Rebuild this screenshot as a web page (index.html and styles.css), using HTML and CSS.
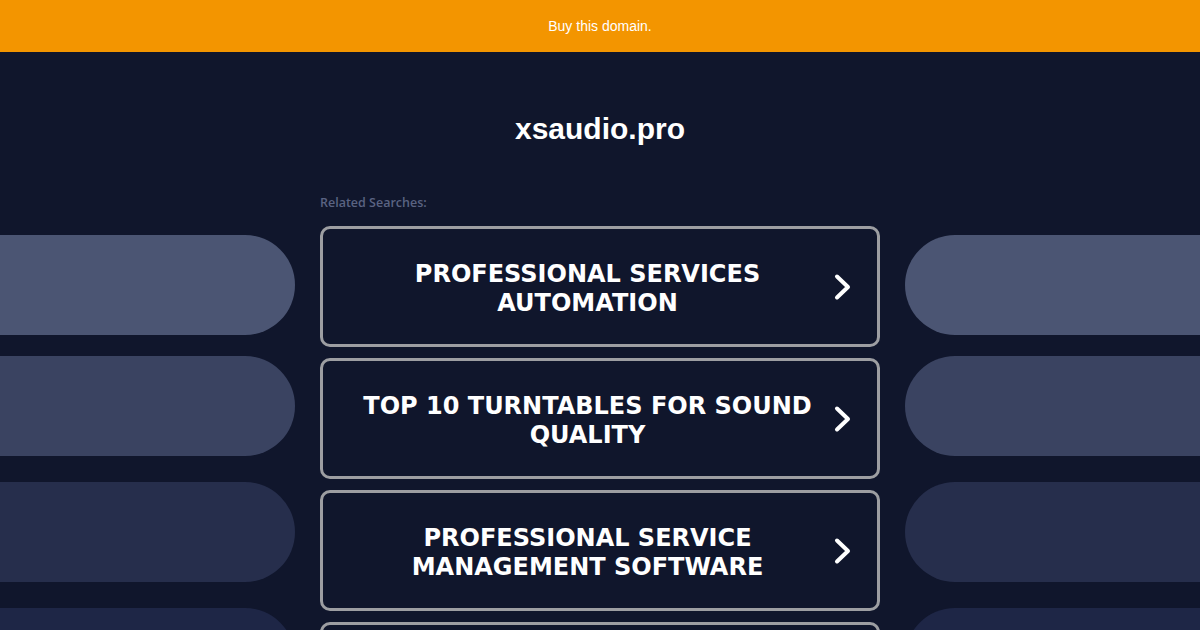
FILE: index.html
```html
<!DOCTYPE html>
<html lang="en">
<head>
    <meta charset="UTF-8">
    <meta name="viewport" content="width=device-width, initial-scale=1.0">
    <title>xsaudio.pro</title>
    <link rel="stylesheet" href="styles.css">
</head>
<body>
    <div class="topbar">
        <a href="#">Buy this domain.</a>
    </div>
    <div class="main">
        <div class="side side-left">
            <div class="pill pill-1"></div>
            <div class="pill pill-2"></div>
            <div class="pill pill-3"></div>
            <div class="pill pill-4"></div>
        </div>
        <div class="center">
            <h1>xsaudio.pro</h1>
            <p class="label">Related Searches:</p>
            <a class="card" href="#">
                <span class="card-text">PROFESSIONAL SERVICES AUTOMATION</span>
                <svg class="chevron" width="20" height="28" viewBox="0 0 20 28"><path d="M4 3.5 L15 14 L4 24.5"/></svg>
            </a>
            <a class="card" href="#">
                <span class="card-text">TOP 10 TURNTABLES FOR SOUND QUALITY</span>
                <svg class="chevron" width="20" height="28" viewBox="0 0 20 28"><path d="M4 3.5 L15 14 L4 24.5"/></svg>
            </a>
            <a class="card" href="#">
                <span class="card-text">PROFESSIONAL SERVICE MANAGEMENT SOFTWARE</span>
                <svg class="chevron" width="20" height="28" viewBox="0 0 20 28"><path d="M4 3.5 L15 14 L4 24.5"/></svg>
            </a>
            <a class="card" href="#"></a>
        </div>
        <div class="side side-right">
            <div class="pill pill-1"></div>
            <div class="pill pill-2"></div>
            <div class="pill pill-3"></div>
            <div class="pill pill-4"></div>
        </div>
    </div>
</body>
</html>
```

FILE: styles.css
```css
* {
    margin: 0;
    padding: 0;
    box-sizing: border-box;
}

body {
    height: 630px;
    overflow: hidden;
    background: #10162c;
    font-family: 'Liberation Sans', Arial, sans-serif;
    color: #fff;
}

.topbar {
    height: 52px;
    background: #f39500;
    display: flex;
    justify-content: center;
    align-items: center;
}

.topbar a {
    color: #fff;
    font-size: 14px;
    text-decoration: none;
}

.main {
    display: flex;
    justify-content: center;
    gap: 25px;
}

.side {
    width: 295px;
    flex-shrink: 0;
    display: flex;
    flex-direction: column;
    padding-top: 183px;
}

.pill {
    height: 100px;
}

.pill + .pill {
    margin-top: 21px;
}

.side .pill-3,
.side .pill-4 {
    margin-top: 26px;
}

.side-left .pill {
    border-radius: 0 50px 50px 0;
}

.side-right .pill {
    border-radius: 50px 0 0 50px;
}

.pill-1 { background: #4b5573; }
.pill-2 { background: #3a4361; }
.pill-3 { background: #262e4c; }
.pill-4 { background: #1e2646; }

.center {
    width: 560px;
    flex-shrink: 0;
    padding-top: 60px;
}

h1 {
    font-size: 30px;
    line-height: 34px;
    font-weight: bold;
    text-align: center;
}

.label {
    margin-top: 49px;
    font-family: 'Open Sans', sans-serif;
    font-size: 12.5px;
    line-height: 16px;
    font-weight: 600;
    color: #5a6382;
    margin-bottom: 15px;
}

.card {
    display: flex;
    align-items: center;
    height: 121px;
    margin-bottom: 11px;
    padding: 4px 22px 0 40px;
    border: 3px solid #9d9ea2;
    border-radius: 10px;
    background: #10162c;
    color: #fff;
    text-decoration: none;
}

.card-text {
    width: 449px;
    font-family: 'DejaVu Sans', Verdana, sans-serif;
    font-size: 24px;
    line-height: 29px;
    font-weight: bold;
    text-align: center;
}

.chevron {
    margin-left: auto;
    margin-right: 2px;
    margin-top: -4px;
    fill: none;
    stroke: #fff;
    stroke-width: 4;
    stroke-linecap: round;
    stroke-linejoin: round;
}
```
